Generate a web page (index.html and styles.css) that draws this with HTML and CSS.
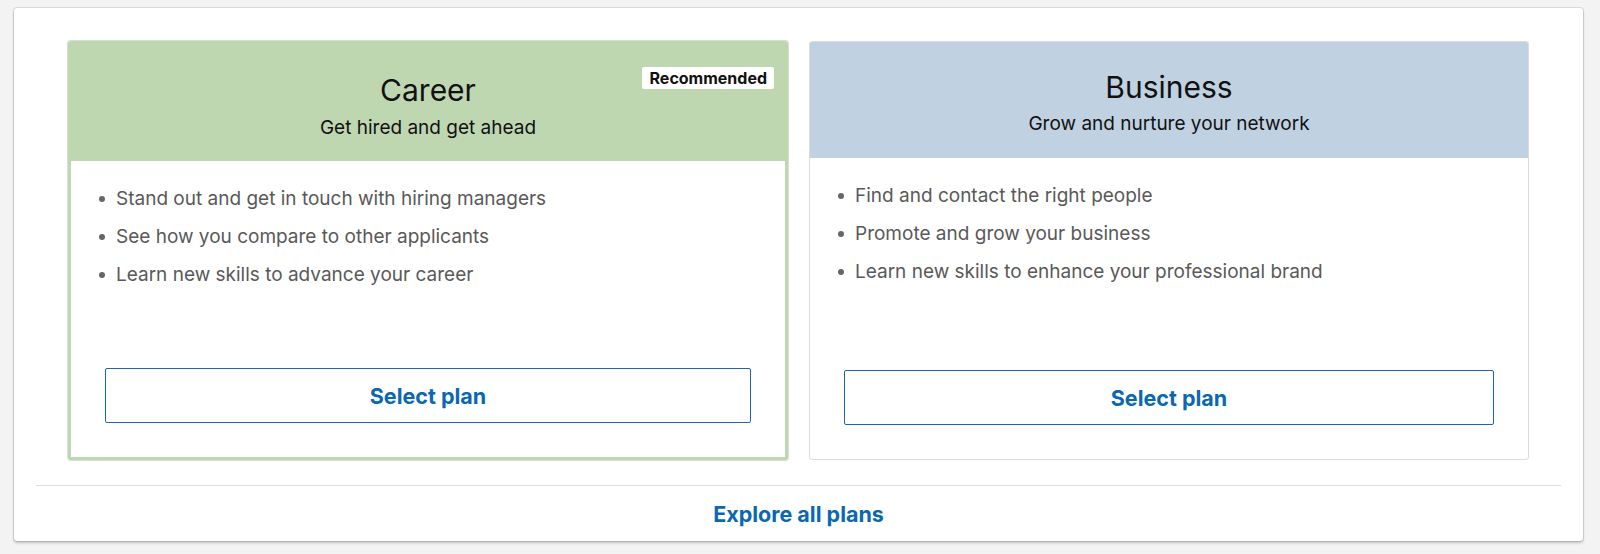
FILE: index.html
```html
<!DOCTYPE html>
<html lang="en">
<head>
  <meta charset="UTF-8" />
  <meta name="viewport" content="width=device-width, initial-scale=1" />
  <title>Premium plans</title>
  <link rel="stylesheet" href="styles.css">
</head>
<body>
  <div class="panel">
    <div class="plans">
      <!-- Career -->
      <div class="plan plan-career">
        <div class="plan-head">
          <span class="badge">Recommended</span>
          <h2>Career</h2>
          <p>Get hired and get ahead</p>
        </div>
        <div class="plan-body">
          <ul>
            <li>Stand out and get in touch with hiring managers</li>
            <li>See how you compare to other applicants</li>
            <li>Learn new skills to advance your career</li>
          </ul>
          <button class="select-btn">Select plan</button>
        </div>
      </div>

      <!-- Business -->
      <div class="plan plan-business">
        <div class="plan-head">
          <h2>Business</h2>
          <p>Grow and nurture your network</p>
        </div>
        <div class="plan-body">
          <ul>
            <li>Find and contact the right people</li>
            <li>Promote and grow your business</li>
            <li>Learn new skills to enhance your professional brand</li>
          </ul>
          <button class="select-btn">Select plan</button>
        </div>
      </div>
    </div>

    <div class="panel-foot">
      <a href="#">Explore all plans</a>
    </div>
  </div>
</body>
</html>
```

FILE: styles.css
```css
body {
  font-family: Inter, "Noto Sans", Arial, sans-serif;
  background-color: #f3f3f3;
  margin: 0;
  padding: 8px 17px 12px 14px;
}

.panel {
  background: #fff;
  border-radius: 3px;
  box-shadow: 0 0 0 1px rgba(0, 0, 0, 0.1), 0 2px 3px rgba(0, 0, 0, 0.2);
}

.plans {
  display: grid;
  grid-template-columns: 720px 720px;
  gap: 21px;
  padding: 33px 54px 0;
}

.plan {
  display: flex;
  flex-direction: column;
  box-sizing: border-box;
  height: 419px;
  border: 1px solid #dcdcdc;
  border-radius: 3px;
  overflow: hidden;
}

.plan-career {
  border: 3px solid #bed7b1;
  box-shadow: 0 0 0 1px #d6ddd2;
}

.plan-head {
  position: relative;
  text-align: center;
  height: 116px;
  box-sizing: border-box;
  padding-top: 27px;
}

.plan-career .plan-head {
  height: 117px;
  padding-top: 28px;
  background-color: #bed7b1;
}

.plan-business .plan-head {
  background-color: #c0d1e1;
}

.plan-head h2 {
  margin: 0;
  font-size: 30px;
  font-weight: 400;
  line-height: 36px;
  color: #111;
}

.plan-head p {
  margin: 7px 0 0;
  font-size: 19px;
  line-height: 24px;
  color: #111;
}

.plan-career .plan-head p {
  margin-top: 8px;
}

.badge {
  position: absolute;
  top: 23px;
  right: 11px;
  background: #fff;
  border-radius: 2px;
  padding: 0 7px 0 8px;
  font-size: 16px;
  font-weight: 700;
  line-height: 22px;
  color: #111;
}

.plan-body {
  flex: 1;
  display: flex;
  flex-direction: column;
  padding: 25px 34px 34px;
}

.plan-body ul {
  list-style: none;
  margin: 0;
  padding: 0;
}

.plan-body li {
  font-size: 19px;
  line-height: 25px;
  margin-bottom: 13px;
  color: #595959;
}

.plan-body li::before {
  content: "";
  display: inline-block;
  width: 6px;
  height: 6px;
  border-radius: 50%;
  background: #666;
  margin: 0 11px 0 -6px;
  vertical-align: 3px;
}

.select-btn {
  margin-top: auto;
  height: 55px;
  background: #fff;
  border: 1px solid #1d65b0;
  border-radius: 2px;
  font-family: inherit;
  font-size: 21.5px;
  font-weight: 700;
  color: #0a67b2;
  cursor: pointer;
}

.panel-foot {
  margin: 25px 22px 0;
  border-top: 1px solid #dedede;
  height: 55px;
  display: flex;
  align-items: center;
  justify-content: center;
}

.panel-foot a {
  font-size: 21.5px;
  font-weight: 700;
  color: #0a67b2;
  text-decoration: none;
}
```
